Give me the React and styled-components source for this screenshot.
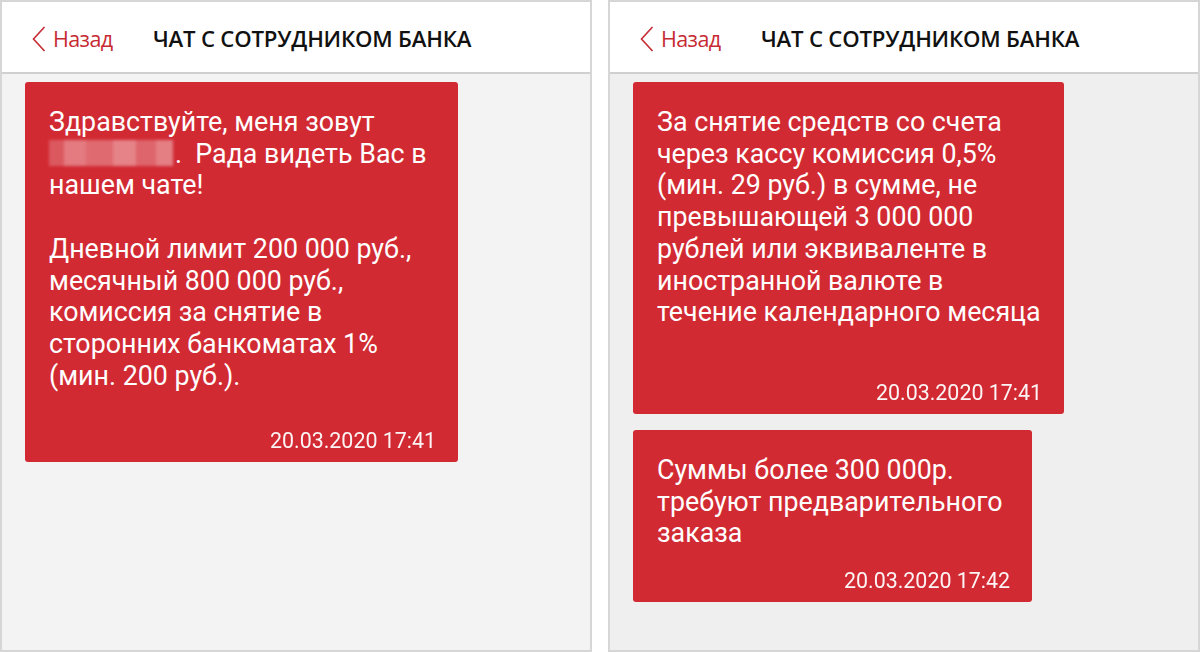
import React from 'react';
import styled, { createGlobalStyle } from 'styled-components';

// -------------------------------------------------

const GlobalStyle = createGlobalStyle`
  html, body {
    margin: 0;
    padding: 0;
    background: #fff;
  }
  body {
    font-family: Roboto, 'Noto Sans', sans-serif;
  }
`;

const chats = [
  {
    bg: '#f3f3f3',
    messages: [
      {
        width: 433,
        timeGap: 37,
        lines: [
          'Здравствуйте, меня зовут',
          'NAME',
          'нашем чате!',
          '',
          'Дневной лимит 200 000 руб.,',
          'месячный 800 000 руб.,',
          'комиссия за снятие в',
          'сторонних банкоматах 1%',
          '(мин. 200 руб.).',
        ],
        time: '20.03.2020 17:41',
      },
    ],
  },
  {
    bg: '#efefef',
    messages: [
      {
        width: 431,
        timeGap: 52,
        lines: [
          'За снятие средств со счета',
          'через кассу комиссия 0,5%',
          '(мин. 29 руб.) в сумме, не',
          'превышающей 3 000 000',
          'рублей или эквиваленте в',
          'иностранной валюте в',
          'течение календарного месяца',
        ],
        time: '20.03.2020 17:41',
      },
      {
        width: 399,
        timeGap: 19,
        lines: [
          'Суммы более 300 000р.',
          'требуют предварительного',
          'заказа',
        ],
        time: '20.03.2020 17:42',
      },
    ],
  },
];

const Chevron = () => (
  <svg width="14" height="26" viewBox="0 0 14 26" fill="none">
    <path d="M12.5 1 L1.5 13 L12.5 25" stroke="#c72a33" strokeWidth="1.6" />
  </svg>
);

const Line = ({ text }) => {
  if (text === '') return <TextLine>&nbsp;</TextLine>;
  if (text === 'NAME')
    return (
      <TextLine>
        <Blurred />.&nbsp; Рада видеть Вас в
      </TextLine>
    );
  return <TextLine>{text}</TextLine>;
};

const App = () => {
  return (
    <>
      <GlobalStyle />
      <Page>
        {chats.map((chat, i) => (
          <Panel key={i} $bg={chat.bg}>
            <Header>
              <Back>
                <Chevron />
                <BackText>Назад</BackText>
              </Back>
              <Title>ЧАТ С СОТРУДНИКОМ БАНКА</Title>
            </Header>
            <Messages>
              {chat.messages.map((m, j) => (
                <Bubble key={j} $width={m.width}>
                  <Body>
                    {m.lines.map((l, k) => (
                      <Line key={k} text={l} />
                    ))}
                  </Body>
                  <Time $gap={m.timeGap}>{m.time}</Time>
                </Bubble>
              ))}
            </Messages>
          </Panel>
        ))}
      </Page>
    </>
  );
};

export default App;

// STYLING ----------------------------------------
const Page = styled.div`
  display: flex;
  justify-content: space-between;
  width: 1200px;
  height: 652px;
  overflow: hidden;
`;

const Panel = styled.div`
  width: 592px;
  height: 652px;
  box-sizing: border-box;
  border: 2px solid #d6d6d6;
  background: ${(p) => p.$bg};
  display: flex;
  flex-direction: column;
`;

const Header = styled.div`
  height: 72px;
  flex-shrink: 0;
  background: #fff;
  border-bottom: 2px solid #cfcfcf;
  display: flex;
  align-items: center;
  padding-left: 30px;
  padding-top: 3px;
  box-sizing: border-box;
`;

const Back = styled.div`
  display: flex;
  align-items: center;
  gap: 7px;
  width: 121px;
`;

const BackText = styled.span`
  font-family: 'Open Sans', sans-serif;
  font-weight: 400;
  font-size: 21.5px;
  letter-spacing: -0.6px;
  color: #c72a33;
`;

const Title = styled.div`
  font-family: 'Open Sans', sans-serif;
  font-weight: 600;
  font-size: 22.2px;
  color: #111;
  letter-spacing: -0.2px;
`;

const Messages = styled.div`
  display: flex;
  flex-direction: column;
  align-items: flex-start;
  gap: 16px;
  padding: 8px 0 0 23px;
`;

const Bubble = styled.div`
  width: ${(p) => p.$width}px;
  box-sizing: border-box;
  background: #d22a33;
  border-radius: 3px;
  color: #fff;
  padding: 25px 22px 9px 24px;
`;

const Body = styled.div`
  font-size: 26.8px;
  line-height: 31.7px;
`;

const TextLine = styled.div`
  white-space: nowrap;
`;

const Blurred = styled.span`
  display: inline-block;
  vertical-align: -3px;
  width: 124px;
  height: 26px;
  margin-right: 2px;
  background:
    linear-gradient(90deg, rgba(255,255,255,0.22) 0 12%, rgba(255,255,255,0.38) 12% 30%, rgba(255,255,255,0.3) 30% 52%, rgba(255,255,255,0.42) 52% 70%, rgba(255,255,255,0.28) 70% 86%, rgba(255,255,255,0.4) 86% 100%);
  filter: blur(1.5px);
`;

const Time = styled.div`
  text-align: right;
  font-size: 21.4px;
  line-height: 24px;
  margin-top: ${(p) => p.$gap}px;
  opacity: 0.95;
`;
